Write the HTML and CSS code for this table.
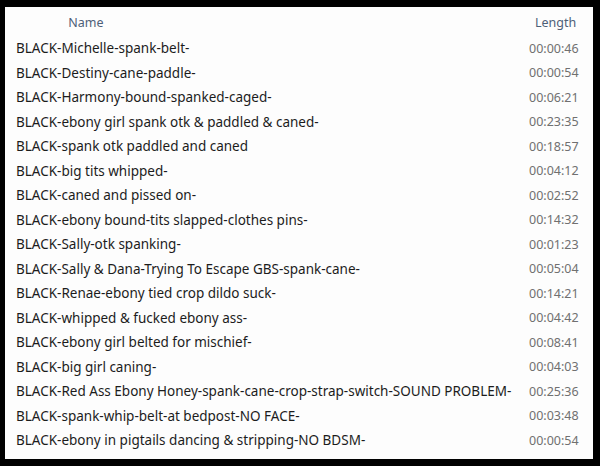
FILE: index.html
```html
<!DOCTYPE html>
<html lang="en">
<head>
    <meta charset="UTF-8">
    <title>Files</title>
    <link rel="stylesheet" href="styles.css">
</head>
<body>
    <div class="panel">
        <div class="header">
            <div class="col-name">Name</div>
            <div class="col-length">Length</div>
        </div>
        <div class="list">
            <div class="row"><span class="name">BLACK-Michelle-spank-belt-</span><span class="time">00:00:46</span></div>
            <div class="row"><span class="name">BLACK-Destiny-cane-paddle-</span><span class="time">00:00:54</span></div>
            <div class="row"><span class="name">BLACK-Harmony-bound-spanked-caged-</span><span class="time">00:06:21</span></div>
            <div class="row"><span class="name">BLACK-ebony girl spank otk &amp; paddled &amp; caned-</span><span class="time">00:23:35</span></div>
            <div class="row"><span class="name">BLACK-spank otk paddled and caned</span><span class="time">00:18:57</span></div>
            <div class="row"><span class="name">BLACK-big tits whipped-</span><span class="time">00:04:12</span></div>
            <div class="row"><span class="name">BLACK-caned and pissed on-</span><span class="time">00:02:52</span></div>
            <div class="row"><span class="name">BLACK-ebony bound-tits slapped-clothes pins-</span><span class="time">00:14:32</span></div>
            <div class="row"><span class="name">BLACK-Sally-otk spanking-</span><span class="time">00:01:23</span></div>
            <div class="row"><span class="name">BLACK-Sally &amp; Dana-Trying To Escape GBS-spank-cane-</span><span class="time">00:05:04</span></div>
            <div class="row"><span class="name">BLACK-Renae-ebony tied crop dildo suck-</span><span class="time">00:14:21</span></div>
            <div class="row"><span class="name">BLACK-whipped &amp; fucked ebony ass-</span><span class="time">00:04:42</span></div>
            <div class="row"><span class="name">BLACK-ebony girl belted for mischief-</span><span class="time">00:08:41</span></div>
            <div class="row"><span class="name">BLACK-big girl caning-</span><span class="time">00:04:03</span></div>
            <div class="row"><span class="name">BLACK-Red Ass Ebony Honey-spank-cane-crop-strap-switch-SOUND PROBLEM-</span><span class="time">00:25:36</span></div>
            <div class="row"><span class="name">BLACK-spank-whip-belt-at bedpost-NO FACE-</span><span class="time">00:03:48</span></div>
            <div class="row"><span class="name">BLACK-ebony in pigtails dancing &amp; stripping-NO BDSM-</span><span class="time">00:00:54</span></div>
        </div>
    </div>
</body>
</html>
```

FILE: styles.css
```css
* {
    margin: 0;
    padding: 0;
    box-sizing: border-box;
}

body {
    background: #000;
    width: 600px;
    height: 466px;
    padding: 7px 7px 7px 5px;
    font-family: 'Noto Sans', 'DejaVu Sans', sans-serif;
    font-size: 12.5px;
}

.panel {
    background: #fdfdfd;
    height: 452px;
    display: flex;
    flex-direction: column;
}

.header {
    display: flex;
    height: 29px;
    padding-top: 2px;
    align-items: center;
    color: #4d6078;
}

.col-name {
    width: 162px;
    text-align: center;
}

.col-length {
    margin-left: auto;
    width: 64px;
    padding-left: 6px;
}

.list {
    display: flex;
    flex-direction: column;
}

.row {
    display: flex;
    height: 24.5px;
    align-items: center;
    padding-left: 11px;
}

.name {
    color: #1c1c1c;
    font-size: 13.5px;
    flex: 1;
}

.time {
    color: #707070;
    width: 64px;
}
```
